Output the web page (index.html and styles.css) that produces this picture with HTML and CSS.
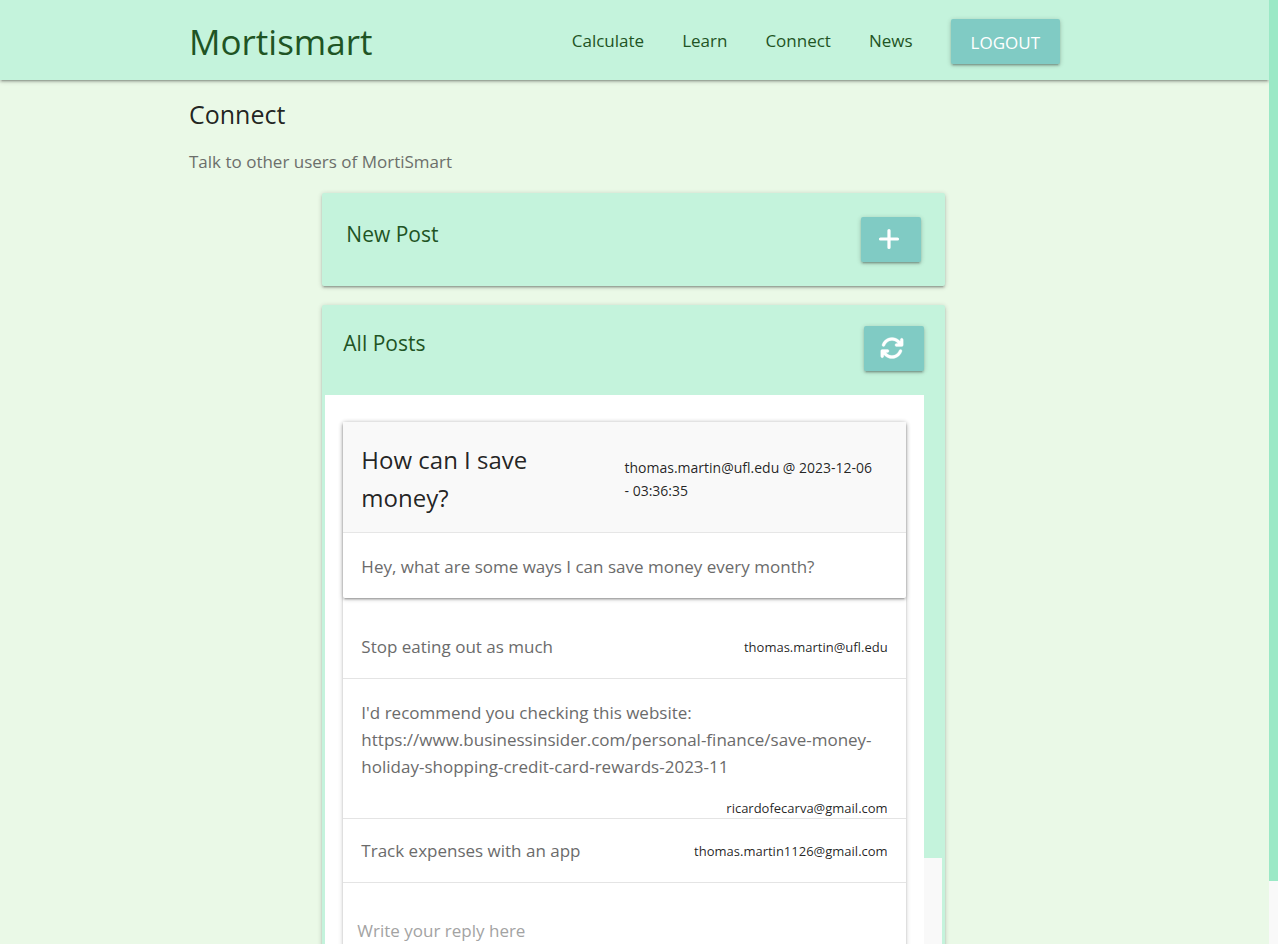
FILE: index.html
```html
<!DOCTYPE html>
<html lang="en">
<head>
<meta charset="utf-8">
<title>Mortismart</title>
<meta name="viewport" content="width=device-width, initial-scale=1">
<link rel="stylesheet" href="styles.css">
</head>
<body>
<div class="view">
  <div class="page">
    <header class="navbar">
      <nav class="container nav-inner">
        <a class="brand" href="#">Mortismart</a>
        <div class="nav-links">
          <a href="#">Calculate</a>
          <a href="#">Learn</a>
          <a href="#">Connect</a>
          <a href="#">News</a>
          <button class="btn" type="button">LOGOUT</button>
        </div>
      </nav>
    </header>
    <main class="container content">
      <h1 class="page-title">Connect</h1>
      <p class="lead">Talk to other users of MortiSmart</p>
      <section class="card new-post">
        <h2 class="card-title">New Post</h2>
        <button class="btn icon-btn" type="button" aria-label="New post">
          <svg class="icon" viewBox="0 0 24 24"><path d="M12 3.500V20.500M3.500 12H20.500" fill="none" stroke="#fff" stroke-width="3.200" stroke-linecap="round"/></svg>
        </button>
      </section>
      <section class="card all-posts">
        <div class="all-head">
          <h2 class="card-title">All Posts</h2>
          <button class="btn icon-btn" type="button" aria-label="Refresh posts">
            <svg class="icon" viewBox="0 0 512 512"><path fill="#fff" stroke="#fff" stroke-width="6" d="M105.100 202.600c7.700-21.800 20.200-42.300 37.800-59.800c62.500-62.500 163.800-62.500 226.300 0L386.300 160H352c-17.700 0-32 14.300-32 32s14.300 32 32 32H463.500c17.700 0 32-14.300 32-32V80c0-17.700-14.300-32-32-32s-32 14.300-32 32v35.200L414.400 97.600c-87.500-87.500-229.300-87.500-316.800 0C73.200 122 55.600 150.700 44.800 181.400c-5.900 16.700 2.900 34.900 19.500 40.800s34.900-2.900 40.800-19.500zM39 289.300c-5 1.500-9.800 4.200-13.700 8.200c-4 4-6.700 8.800-8.100 14c-1.100 3.500-1.200 6.200-1.200 8.600V432c0 17.700 14.300 32 32 32s32-14.300 32-32V396.900l17.600 17.500c87.500 87.400 229.300 87.400 316.700 0c24.400-24.400 42.100-53.100 52.900-83.700c5.900-16.700-2.900-34.900-19.500-40.800s-34.900 2.900-40.800 19.500c-7.700 21.800-20.200 42.300-37.800 59.800c-62.500 62.500-163.800 62.500-226.300 0L125.600 352H160c17.700 0 32-14.300 32-32s-14.300-32-32-32H48.400c-3.200 0-6.300.4-9.400 1.300z"/><path fill="#fff" d="M386 160L450 96V200H350V180ZM126 352L62 416V312H162V332Z"/></svg>
          </button>
        </div>
        <div class="feed">
          <div class="feed-body">
            <article class="thread">
              <div class="post">
                <div class="post-head">
                  <h3 class="post-title">How can I save money?</h3>
                  <p class="post-meta">thomas.martin@ufl.edu @ 2023-12-06 - 03:36:35</p>
                </div>
                <p class="post-text">Hey, what are some ways I can save money every month?</p>
              </div>
              <ul class="replies">
                <li class="reply first"><span>Stop eating out as much</span><span class="author">thomas.martin@ufl.edu</span></li>
                <li class="reply long"><span>I'd recommend you checking this website: https://www.businessinsider.com/personal-finance/save-money-holiday-shopping-credit-card-rewards-2023-11</span><span class="author">ricardofecarva@gmail.com</span></li>
                <li class="reply"><span>Track expenses with an app</span><span class="author">thomas.martin1126@gmail.com</span></li>
              </ul>
              <form class="reply-form"><input type="text" placeholder="Write your reply here" aria-label="Write your reply here"></form>
            </article>
          </div>
          <div class="feed-scroll" aria-hidden="true"><div class="feed-thumb"></div></div>
        </div>
      </section>
    </main>
  </div>
  <div class="page-scroll" aria-hidden="true"><div class="page-thumb"></div></div>
</div>
</body>
</html>
```
FILE: styles.css
```css
* { box-sizing: border-box; }
body {
  margin: 0;
  font-family: "Open Sans", sans-serif;
  font-size: 17px;
  line-height: 27px;
  color: rgba(0, 0, 0, 0.87);
  background: #eaf9e7;
}
h1, h2, h3, p, ul { margin: 0; padding: 0; font-weight: inherit; }
a { color: inherit; text-decoration: none; }
.view { display: flex; height: 100vh; overflow: hidden; }
.page { flex: 1; min-width: 0; }
.container { width: 96%; max-width: 891px; margin: 0 auto; padding-right: 2px; }
.navbar {
  background: #c4f3dc;
  color: #1f5424;
  box-shadow: 0 2px 2px 0 rgba(0,0,0,.14), 0 3px 1px -2px rgba(0,0,0,.12), 0 1px 5px 0 rgba(0,0,0,.2);
}
.nav-inner { display: flex; justify-content: space-between; align-items: center; height: 80px; padding-right: 20px; }
.brand { font-size: 35px; line-height: 80px; padding-top: 3px; }
.nav-links { display: flex; align-items: center; gap: 38px; }
.btn {
  font: inherit;
  height: 45px;
  padding: 0 20px;
  border: 0;
  border-radius: 2px;
  color: #fff;
  background: #80cbc4;
  box-shadow: 0 2px 2px 0 rgba(0,0,0,.14), 0 3px 1px -2px rgba(0,0,0,.12), 0 1px 5px 0 rgba(0,0,0,.2);
}
.nav-links .btn { margin-top: 3px; padding-top: 2px; }
.icon-btn { display: flex; justify-content: center; width: 60px; padding: 10px 0; }
.icon { width: 24px; height: 24px; }
.icon-btn .icon { margin-right: 4px; }
.page-title { font-size: 25px; line-height: 38px; padding-top: 15px; }
.lead { color: #6c6f6b; padding: 15px 0 18px; }
.card {
  width: 70%;
  margin: 0 auto 19px;
  border-radius: 2px;
  background: #c4f3dc;
  color: #1f5424;
  box-shadow: 0 2px 2px 0 rgba(0,0,0,.14), 0 3px 1px -2px rgba(0,0,0,.12), 0 1px 5px 0 rgba(0,0,0,.2);
}
.new-post { display: flex; justify-content: space-between; padding: 24px; }
.card-title { font-size: 21px; line-height: 34px; }
.all-posts { padding: 21px 3px 0; }
.all-head { display: flex; justify-content: space-between; padding: 0 18px 24px; }
.feed { display: flex; height: 672px; background: #fff; }
.feed-body { flex: 1; min-width: 0; padding: 27px 18px 0; }
.feed-scroll { width: 18px; background: #f9f9f9; }
.feed-thumb { height: 463px; background: #c4f3dc; }
.thread {
  height: 645px;
  color: rgba(0, 0, 0, 0.87);
  background: #fff;
  box-shadow: 0 2px 2px 0 rgba(0,0,0,.14), 0 3px 1px -2px rgba(0,0,0,.12), 0 1px 5px 0 rgba(0,0,0,.2);
}
.post {
  border-radius: 2px;
  box-shadow: 0 2px 2px 0 rgba(0,0,0,.14), 0 3px 1px -2px rgba(0,0,0,.12), 0 1px 5px 0 rgba(0,0,0,.2);
}
.post-head {
  display: grid;
  grid-template-columns: 1fr 1fr;
  align-items: center;
  height: 111px;
  padding: 3px 18px 0;
  background: #f9f9f9;
  border-bottom: 1px solid #e6e6e6;
}
.post-title { font-size: 24px; line-height: 38px; font-weight: 500; max-width: 200px; }
.post-meta { font-size: 14px; line-height: 23px; padding-right: 8px; }
.post-text { padding: 20px 18px 18px; color: #6b6b6b; }
.replies { list-style: none; }
.reply {
  display: flex;
  flex-wrap: wrap;
  justify-content: space-between;
  align-items: center;
  padding: 18px;
  color: #6b6b6b;
  border-bottom: 1px solid #e4e4e4;
}
.reply.first { padding-top: 35px; }
.reply.long { padding: 20px 18px 0; row-gap: 18px; }
.author { margin-left: auto; font-size: 13px; line-height: 20px; color: rgba(0, 0, 0, 0.87); }
.reply-form { padding: 29px 14px; }
.reply-form input {
  width: 100%;
  height: 36px;
  padding: 0;
  border: 0;
  outline: 0;
  font: inherit;
  background: transparent;
}
.reply-form input::placeholder { color: #a3a3a3; opacity: 1; }
.page-scroll { width: 9px; background: #f9f9f9; }
.page-thumb { height: 881px; background: #9be9c6; }
```
